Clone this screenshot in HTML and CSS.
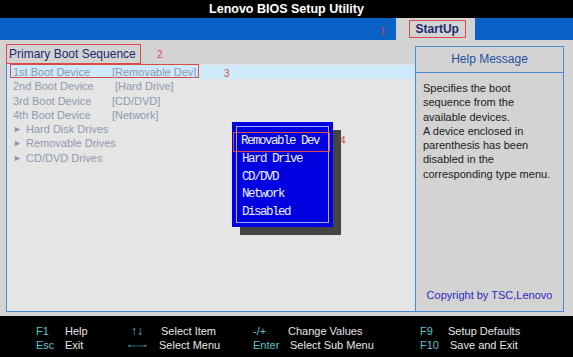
FILE: index.html
```html
<!DOCTYPE html>
<html lang="en">
<head>
    <meta charset="UTF-8">
    <meta name="viewport" content="width=device-width, initial-scale=1.0">
    <title>Lenovo BIOS Setup Utility</title>
    <link rel="stylesheet" href="styles.css">
</head>
<body>
    <header class="title">Lenovo BIOS Setup Utility</header>
    <nav class="menubar">
        <span class="mark mark-1">1</span>
        <div class="tab">
            <span class="tab-label">StartUp</span>
        </div>
    </nav>
    <main class="main">
        <section class="left">
            <div class="section-head">
                <span class="head-label">Primary Boot Sequence</span>
                <span class="mark mark-2">2</span>
            </div>
            <div class="list">
                <div class="row selected">
                    <span class="boxed">
                        <span class="name">1st Boot Device</span>
                        <span class="value">[Removable Dev]</span>
                    </span>
                    <span class="mark mark-3">3</span>
                </div>
                <div class="row">
                    <span class="name">2nd Boot Device</span>
                    <span class="value shift">[Hard Drive]</span>
                </div>
                <div class="row">
                    <span class="name">3rd Boot Device</span>
                    <span class="value">[CD/DVD]</span>
                </div>
                <div class="row">
                    <span class="name">4th Boot Device</span>
                    <span class="value">[Network]</span>
                </div>
                <div class="row sub"><span class="arrow">&#9658;</span>Hard Disk Drives</div>
                <div class="row sub"><span class="arrow">&#9658;</span>Removable Drives</div>
                <div class="row sub"><span class="arrow">&#9658;</span>CD/DVD Drives</div>

                <!-- popup menu for the selected boot device -->
                <div class="popup">
                    <div class="popup-inner">
                        <div class="opt current">Removable Dev</div>
                        <div class="opt">Hard Drive</div>
                        <div class="opt">CD/DVD</div>
                        <div class="opt">Network</div>
                        <div class="opt">Disabled</div>
                    </div>
                    <span class="mark mark-4">4</span>
                </div>
            </div>
        </section>
        <aside class="help">
            <div class="help-head">Help Message</div>
            <div class="help-body">
                Specifies the boot<br>
                sequence from the<br>
                available devices.<br>
                A device enclosed in<br>
                parenthesis has been<br>
                disabled in the<br>
                corresponding type menu.
            </div>
            <div class="copyright">Copyright by TSC,Lenovo</div>
        </aside>
    </main>
    <footer class="keys">
        <span class="key">F1</span><span>Help</span>
        <span class="key arrows">&#8593;&#8595;</span><span>Select Item</span>
        <span class="key">-/+</span><span>Change Values</span>
        <span class="key">F9</span><span>Setup Defaults</span>

        <span class="key">Esc</span><span>Exit</span>
        <span class="key long">&#10229;&#10230;</span><span class="nudge-l">Select Menu</span>
        <span class="key">Enter</span><span class="nudge-r">Select Sub Menu</span>
        <span class="key">F10</span><span class="nudge-r">Save and Exit</span>
    </footer>
</body>
</html>
```

FILE: styles.css
```css
body {
    margin: 0;
    width: 573px;
    height: 357px;
    overflow: hidden;
    font-family: "Liberation Sans", Arial, sans-serif;
    font-size: 11px;
    background-color: #d3d3d3;
}
.title {
    height: 18px;
    line-height: 18px;
    background-color: #000;
    color: #fff;
    font-weight: bold;
    font-size: 12.5px;
    text-align: center;
}
.menubar {
    height: 22px;
    background-color: #0a62c6;
    display: flex;
    align-items: stretch;
    padding-left: 380px;
}
.tab {
    margin-left: 10px;
    width: 79px;
    background-color: #d3d3d3;
    display: flex;
    align-items: center;
    padding-left: 13px;
    box-sizing: border-box;
}
.tab-label {
    border: 1px solid #e04848;
    height: 16px;
    line-height: 16px;
    padding: 0 6px;
    color: #1a2a70;
    font-weight: bold;
    font-size: 12px;
}
.mark {
    color: #e04848;
    font-size: 10px;
}
.mark-1 {
    align-self: center;
    padding-top: 4px;
    color: #c04060;
}

.main {
    height: 276px;
    box-sizing: border-box;
    padding: 4px 9px 4px 6px;
    display: flex;
}
.left {
    width: 409px;
    display: flex;
    flex-direction: column;
}
.section-head {
    height: 20px;
    display: flex;
    align-items: center;
}
.head-label {
    box-sizing: border-box;
    width: 135px;
    height: 20px;
    line-height: 18px;
    border: 1px solid #e04848;
    padding-left: 2px;
    color: #1c2870;
    font-size: 12px;
}
.mark-2 {
    margin-left: 16px;
}
.list {
    flex: 1;
    position: relative;
    background-color: #e5e5e5;
    border-left: 1px solid #4a8ad4;
    border-bottom: 1px solid #4a8ad4;
    padding-top: 1px;
}
.row {
    height: 14.3px;
    line-height: 14.3px;
    padding-left: 6px;
    color: #8d9ab0;
    display: flex;
    white-space: nowrap;
}
.row.selected {
    background-color: #cde9fa;
    padding-left: 3px;
}
.boxed {
    display: flex;
    border: 1px solid #e04848;
    height: 14px;
    line-height: 14px;
    box-sizing: border-box;
    padding-left: 2px;
    width: 189px;
    margin-top: -1px;
}
.name {
    width: 99px;
}
.value.shift {
    padding-left: 3px;
}
.mark-3 {
    margin-left: 25px;
    padding-top: 2px;
}
.arrow {
    font-size: 9px;
    width: 13px;
}

.popup {
    position: absolute;
    left: 225px;
    top: 58px;
    width: 101px;
    height: 105px;
    box-sizing: border-box;
    background-color: #0000e0;
    padding: 4px;
    box-shadow: 8px 8px 0 #444;
}
.popup-inner {
    height: 100%;
    box-sizing: border-box;
    border: 1px solid #a8aaff;
    padding-top: 6px;
}
.opt {
    height: 17.8px;
    line-height: 17.8px;
    padding-left: 5px;
    color: #eef0ff;
    font-family: "Liberation Mono", "Courier New", monospace;
    font-size: 12.5px;
    letter-spacing: -1.5px;
}
.opt.current {
    outline: 1px solid #e04848;
    margin: 0 -1px 0 -3px;
    padding-left: 7px;
}
.mark-4 {
    position: absolute;
    left: 108px;
    top: 13px;
}

.help {
    margin-top: 2px;
    width: 149px;
    box-sizing: border-box;
    border: 1px solid #4a8ad4;
    display: flex;
    flex-direction: column;
}
.help-head {
    height: 25px;
    line-height: 25px;
    border-bottom: 1px solid #4a8ad4;
    text-align: center;
    color: #1f4fa0;
    font-size: 12px;
}
.help-body {
    padding: 8px 0 0 7px;
    line-height: 14.3px;
    color: #202020;
}
.copyright {
    margin-top: auto;
    padding-bottom: 10px;
    text-align: center;
    color: #2a2ac0;
    font-size: 11px;
}

.keys {
    height: 41px;
    box-sizing: border-box;
    padding: 8px 0 0 36px;
    background-color: #000;
    color: #e6e6e6;
    display: grid;
    grid-template-columns: 29px 63px 33px 92px 35px 132px 28px auto;
    grid-auto-rows: 14px;
    line-height: 14px;
}
.key {
    color: #5cc4cc;
}
.key.arrows {
    padding-left: 3px;
    font-size: 12px;
}
.key.long {
    font-family: "DejaVu Sans", sans-serif;
    font-size: 6.5px;
    padding-top: 1px;
}
.nudge-l {
    margin-left: -2px;
}
.nudge-r {
    margin-left: 2px;
}
```
